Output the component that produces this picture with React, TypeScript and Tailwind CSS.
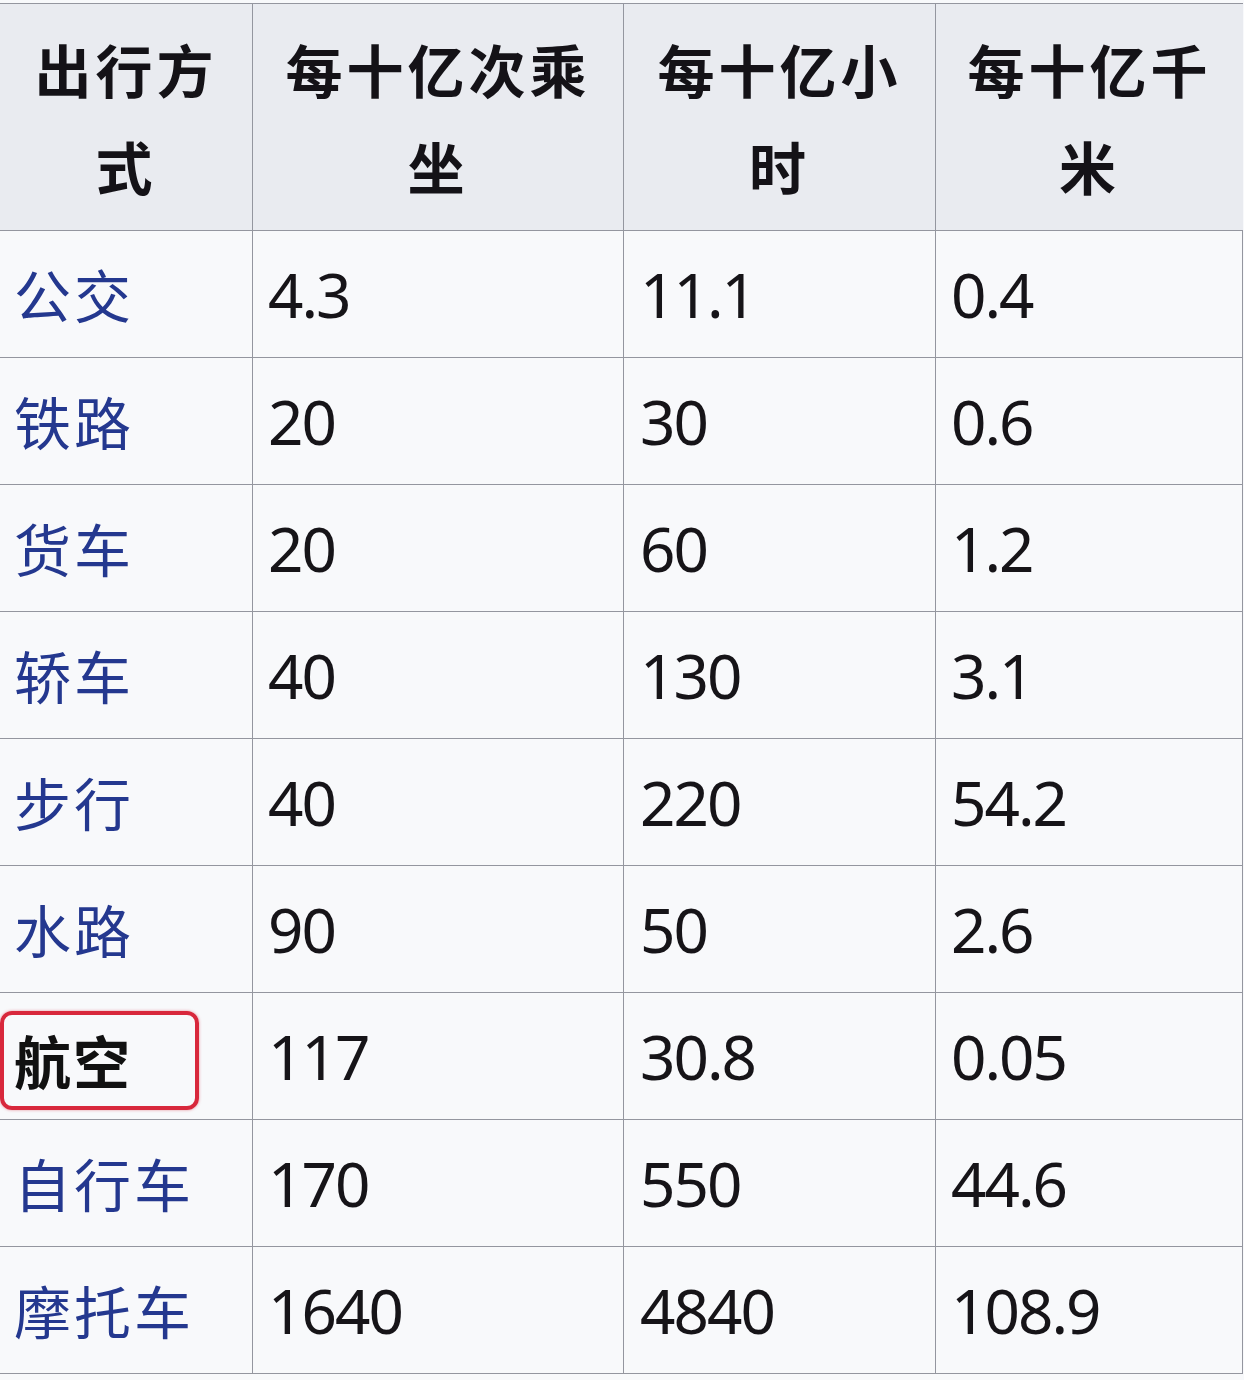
import React from 'react';

type Row = { mode: string; trips: string; hours: string; km: string; highlight?: boolean };

const rows: Row[] = [
  { mode: '公交', trips: '4.3', hours: '11.1', km: '0.4' },
  { mode: '铁路', trips: '20', hours: '30', km: '0.6' },
  { mode: '货车', trips: '20', hours: '60', km: '1.2' },
  { mode: '轿车', trips: '40', hours: '130', km: '3.1' },
  { mode: '步行', trips: '40', hours: '220', km: '54.2' },
  { mode: '水路', trips: '90', hours: '50', km: '2.6' },
  { mode: '航空', trips: '117', hours: '30.8', km: '0.05', highlight: true },
  { mode: '自行车', trips: '170', hours: '550', km: '44.6' },
  { mode: '摩托车', trips: '1640', hours: '4840', km: '108.9' },
];

const cjk = "font-['Noto_Sans_CJK_SC',sans-serif]";
const num = "font-['Noto_Sans','Noto_Sans_CJK_SC',sans-serif]";

function HeaderCell({ lines, first }: { lines: string[]; first?: boolean }) {
  return (
    <div
      className={`flex flex-col items-center justify-center bg-[#e9ebf0] border-b border-[#94969f] ${first ? '' : 'border-l'} ${cjk} text-[57px] leading-[97px] font-bold tracking-[4px] text-[#141217]`}
    >
      {lines.map((l) => (
        <span key={l}>{l}</span>
      ))}
    </div>
  );
}

export default function App() {
  return (
    <div className="w-[1244px] h-[1380px] bg-[#f8f9fb] pt-[3px]">
      <div className="w-[1243px] grid grid-cols-[252px_371px_312px_308px] grid-rows-[227px_repeat(9,127px)] border-t border-r border-[#94969f] bg-[#f8f9fb]">
        <HeaderCell first lines={['出行方', '式']} />
        <HeaderCell lines={['每十亿次乘', '坐']} />
        <HeaderCell lines={['每十亿小', '时']} />
        <HeaderCell lines={['每十亿千', '米']} />

        {rows.map((r) => (
          <React.Fragment key={r.mode}>
            {/* mode column */}
            <div className={`flex items-center border-b border-[#94969f] ${r.highlight ? 'pl-0 pt-[8px]' : 'pl-[14px]'}`}>
              {r.highlight ? (
                <span
                  className={`flex items-center w-[199px] h-[99px] pl-[10px] border-[4px] border-[#d8283c] rounded-[12px] ${cjk} text-[57px] font-bold tracking-[2px] text-[#111] shadow-[0_0_3px_rgba(216,40,60,0.5)]`}
                >
                  {r.mode}
                </span>
              ) : (
                <span className={`${cjk} text-[57px] tracking-[3px] text-[#24388f]`}>{r.mode}</span>
              )}
            </div>
            <div className={`flex items-center pl-[15px] border-l border-b border-[#94969f] ${num} text-[62px] tracking-[-2px] text-[#161418]`}>
              {r.trips}
            </div>
            <div className={`flex items-center pl-[16px] border-l border-b border-[#94969f] ${num} text-[62px] tracking-[-2px] text-[#161418]`}>
              {r.hours}
            </div>
            <div className={`flex items-center pl-[15px] border-l border-b border-[#94969f] ${num} text-[62px] tracking-[-2px] text-[#161418]`}>
              {r.km}
            </div>
          </React.Fragment>
        ))}
      </div>
    </div>
  );
}
